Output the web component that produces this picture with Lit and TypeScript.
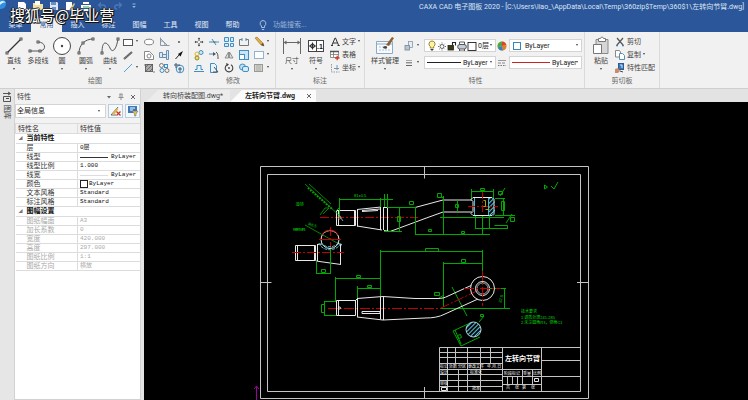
import { LitElement, html, svg, css, nothing } from "lit";
import { customElement, property } from "lit/decorators.js";
import { classMap } from "lit/directives/class-map.js";

const S = "#555";
const B = "#3f8fc4";

/* Small icons are drawn on a 12 x 12 grid. */
const small: Record<string, unknown> = {
  rect: svg`<rect x="1.5" y="3.5" width="9" height="6" fill="#fff" stroke="${S}"/>`,
  ellipse: svg`<ellipse cx="6" cy="6" rx="4.5" ry="2.8" fill="#fff" stroke="#777" stroke-width=".9"/>`,
  axis: svg`<path d="M2.5 1.5v8h9M3 3l6 6M7 9c0-3-2-4-4-4" fill="none" stroke="#8a97a8"/>`,
  dot: svg`<circle cx="6" cy="6" r=".9" fill="#444"/>`,
  thick: svg`<path d="M2 10l8-7" stroke="#555" stroke-width="2"/><path d="M2 10l8-7" stroke="#aaa" stroke-width=".5"/>`,
  poly: svg`<path d="M1.5 2.5h5l4 4v4h-9z" fill="#fff" stroke="#888"/><circle cx="6" cy="7" r="2" fill="none" stroke="#888"/>`,
  mirrorbox: svg`<path d="M1.5 3.5h3v5h-3zM4.5 5.5h4v3h-4zM8.500 1.500h2v9h-2z" fill="#d9ebf7" stroke="#6c8fb0"/>`,
  arrow: svg`<path d="M2.500 10l4-4.500" stroke="#222"/><path d="M10 2L5 5l2.500 2.500z" fill="#111"/>`,
  blueline: svg`<path d="M2 10l8-8" stroke="#5b9fd0"/>`,
  hatch: svg`<rect x="2.500" y="2.500" width="7" height="7" fill="#aaa" stroke="#666"/><path d="M2 6l4-4M2 10l8-8M6 10l4-4M1 3h1M10 10h2" stroke="#555" stroke-width=".7"/>`,
  blocks: svg`<circle cx="3.500" cy="3.500" r="2" fill="none" stroke="#777"/><rect x="6.500" y="2.500" width="3" height="3" fill="none" stroke="${B}"/><circle cx="4" cy="8.500" r="2" fill="none" stroke="${B}"/><circle cx="9" cy="8.500" r="2" fill="none" stroke="#777"/>`,
  gear: svg`<circle cx="7" cy="7" r="3.800" fill="#e3f1fa" stroke="${B}"/><path d="M1 3h6M3 1v5M5 7h4M7 5v5" stroke="#456"/>`,
  move: svg`<path d="M6 2v8M2 6h8" stroke="#444" stroke-dasharray="3 2"/><path d="M6 1.500l1.200 1.500H4.800zM6 10.500l1.200-1.500H4.800zM1.500 6L3 4.800v2.400zM10.500 6L9 4.800v2.400z" fill="#444"/>`,
  trim: svg`<path d="M1 6h4M8 6h3M4 3l4 6" stroke="${B}"/><path d="M5 6h3" stroke="#555"/>`,
  array: svg`<path d="M1.500 1.500h4v4h-4zM7.500 1.500h3v4h-3zM1.500 7.500h4v3h-4zM7.500 7.500h3v3h-3z" fill="#d5eaf8" stroke="${B}"/>`,
  stretch: svg`<path d="M4 3.500H1.500v6h9v-6H8" fill="none" stroke="#777"/><path d="M4 2v3M8 2v3" stroke="${B}"/>`,
  pencil: svg`<path d="M2 2l2-1 6 6 1 3-3-1z" fill="#e0aa45" stroke="#9b7430" stroke-width=".6"/><path d="M8 9l3 1-1-3z" fill="#444"/>`,
  copy: svg`<circle cx="8" cy="3.500" r="2" fill="#cfe7f6" stroke="${B}"/><circle cx="4" cy="5" r="2" fill="none" stroke="#e0b52f"/><circle cx="4" cy="9" r="2" fill="#f5da6a" stroke="#8a8a30"/>`,
  extend: svg`<path d="M1 5h6" stroke="${B}"/><path d="M8 3c2 1 2 4 2 7" fill="none" stroke="#555"/><path d="M5 3l3 2-3 2z" fill="#555"/>`,
  mirror: svg`<path d="M5.500 3v6H2zM6.500 3v6H10z" fill="#ddd" stroke="#888" stroke-width=".9"/>`,
  scale: svg`<rect x="1.500" y="1.500" width="9" height="9" fill="#c8e4f6" stroke="${B}"/><rect x="1.500" y="5.500" width="5" height="5" fill="#fff" stroke="${B}"/>`,
  sheet: svg`<rect x="1.500" y="2.500" width="9" height="7" fill="#fff" stroke="#8fb4d2"/>`,
  offset: svg`<path d="M1 9.500h10M2 7.500h2v-4h4v4h2" fill="none" stroke="${B}"/>`,
  clip: svg`<path d="M2.500 1.500h4l2 2v7h-6z" fill="#e7f3fb" stroke="${B}"/><path d="M6 5l4 5H5" fill="none" stroke="#555"/>`,
  rotate: svg`<path d="M8 2.800A3.800 3.800 0 1 1 4.200 2.700" fill="none" stroke="#444" stroke-width="1.100"/><path d="M3 1l3 1.300-2 1.900z" fill="#444"/><circle cx="6" cy="6" r=".9" fill="#444"/>`,
  union: svg`<circle cx="4.500" cy="5" r="3" fill="#bfe0f5" stroke="${B}"/><rect x="4.500" y="4.500" width="6" height="5" rx="1.500" fill="#d7ecf9" stroke="${B}"/>`,
  pattern: svg`<rect x="1.500" y="2.500" width="8" height="7" fill="#d6d6c8" stroke="#999"/><path d="M3 4h5M3 6h5M3 8h5" stroke="#aaa"/>`,
  text: svg`<path d="M2.800 9.500L6 2h.5l3.200 7.500M4 7h4.500M2 9.500h2M8.500 9.500h2.200" fill="none" stroke="#333"/>`,
  table: svg`<path d="M1.500 2.500h8v6h-8zM1.500 5.500h8M4.500 2.500v6" fill="#fff" stroke="#777" stroke-width=".8"/><path d="M1 2.500h9" stroke="#555" stroke-width="1.500"/><path d="M6 9h4.500M8.200 6.800v4.500" stroke="#d23a2a" stroke-width="1.300"/>`,
  coord: svg`<path d="M2.500 2v8h8" fill="none" stroke="#999" stroke-dasharray="1.500 1"/><path d="M5 6.500h5M8 3v5" stroke="#6d96b8"/>`,
  layers: svg`<rect x="5.500" y="1.500" width="4" height="6" fill="#e5edf5" stroke="#8a97a8" stroke-width=".8"/><rect x="2" y="5.500" width="4.500" height="4.500" fill="#b8c4d2" stroke="#76869a" stroke-width=".8"/>`,
  lines: svg`<path d="M3 3.500h6" stroke="#888" stroke-width=".7"/><path d="M3 5.800h6M3 8.500h6" stroke="#666"/>`,
  bulb: svg`<path d="M6 1a3 3 0 0 1 1.700 5.500V8H4.300V6.500A3 3 0 0 1 6 1z" fill="#fff3a0" stroke="#8c7b20" stroke-width=".9"/><path d="M4.500 9.500h3M5 11h2" stroke="#444"/>`,
  sun: svg`<circle cx="6" cy="6.500" r="2" fill="#fff" stroke="#444" stroke-width=".8"/><path d="M6 2.500v1M6 9.500v1M2 6.500h1M9 6.500h1M3.300 3.800l.7.700M8.700 3.800l-.7.700M3.300 9.200l.7-.7M8.700 9.200l-.7-.7" stroke="#444" stroke-width=".8"/>`,
  lock: svg`<rect x="2" y="5.500" width="5.500" height="4.500" fill="#3d3d10" stroke="#222" stroke-width=".8"/><path d="M6.500 5.500V2.500H9.500v3" fill="none" stroke="#222" stroke-width="1.100"/>`,
  printer: svg`<path d="M3.500 5V2h5v3M3.500 9v2h5V9" fill="#fff" stroke="#333" stroke-width=".8"/><rect x="1.700" y="4.500" width="8.600" height="4.500" rx="2" fill="#c3ced8" stroke="#333" stroke-width=".8"/>`,
  swatch: svg`<rect x="2" y="2.500" width="8" height="8" fill="#fff" stroke="#222" stroke-width=".9"/>`,
  blueswatch: svg`<rect x="2.500" y="2.500" width="7" height="7" fill="#fff" stroke="#3b83bd"/>`,
  wheel: svg`<circle cx="6" cy="6" r="4.500" fill="#e9c62e"/><path d="M6 6V1.500A4.500 4.500 0 0 1 10.300 5z" fill="#d9432f"/><path d="M6 6l4.300-1A4.500 4.500 0 0 1 7 10.400z" fill="#e07f2a"/><path d="M6 6L7 10.400A4.500 4.500 0 0 1 1.800 7.500z" fill="#3a7bd0"/><path d="M6 6L1.800 7.500A4.500 4.500 0 0 1 6 1.500z" fill="#4aa84a"/>`,
  linetype: svg`<path d="M2 3.500h8" stroke="#999"/><path d="M2 6h8" stroke="#888" stroke-dasharray="3 1"/><path d="M2 8.500h8" stroke="#777" stroke-dasharray="1.500 1"/>`,
  cut: svg`<path d="M3 2l6 7M9 2L3 9" stroke="#555" stroke-width="1.200"/><path d="M2 9.500h2M8 9.500h2" stroke="#4b7fae" stroke-width="1.500"/>`,
  pages: svg`<path d="M1.500 1.500h4l1 1.500v5h-5z" fill="#fff" stroke="#888"/><path d="M5.500 4.500h3l2 2v4h-5z" fill="#fff" stroke="#5b8db8"/>`,
  match: svg`<rect x="4.500" y="1.500" width="5" height="6" fill="#3c78b8" stroke="#2b5d93"/><path d="M6 3h2v3" stroke="#cfe4f6" fill="none"/><path d="M1 7l3-1 2 3-2 2H1z" fill="#c98d6a"/><path d="M6 9l3 1" stroke="#444"/>`,
  hint: svg`<path d="M6 1.500a3 3 0 0 1 1.500 5.500v1.500h-3V7A3 3 0 0 1 6 1.500zM4.800 10.500h2.400" fill="none" stroke="#b8c9e4" stroke-width=".9"/>`,
  logo: svg`<circle cx="1" cy="4" r="5" fill="#2f8fe0"/><path d="M0 2c2-2 5-1 6 1-2-1-4 0-6 2z" fill="#d9f0ff"/>`,
  newdoc: svg`<path d="M2 2h6l2 2v7H2z" fill="#fff"/>`,
  open: svg`<path d="M1 3h4l1 1h5v6H1z" fill="#f3dfa0"/><path d="M3 1h5v4H3z" fill="#fff"/>`,
  save: svg`<path d="M2 2h7l1 1v7H2z" fill="#dbe6f6"/><path d="M3 2h5v3H3zM4 7h4v3H4z" fill="#6d8fc4"/>`,
  saveas: svg`<path d="M2 2h6v8H2z" fill="#fff"/><path d="M5 10l5-7 1 1-4 7z" fill="#e7c56a"/>`,
  print: svg`<path d="M3 2h6v2H3zM1 5h10v3H1zM3 9h6v2H3z" fill="#fff"/><path d="M3 7h6" stroke="#3c9a52"/>`,
  undo: svg`<path d="M3 5h4c3 0 3 4 0 4M5 2.500L2.500 5 5 7.500" fill="none" stroke="#4d76b4" stroke-width="1.300"/>`,
  redo: svg`<path d="M9 5H5c-3 0-3 4 0 4M7 2.500L9.500 5 7 7.500" fill="none" stroke="#4d76b4" stroke-width="1.300"/>`,
  more: svg`<path d="M4.500 4h3" stroke="#9fb6da"/><path d="M4.200 6h3.600L6 8z" fill="#9fb6da"/>`,
  pin: svg`<path d="M4.500 3h3M5 3v3M7 3v3M3.500 6.500h5M6 6.500V9" stroke="#777" fill="none" stroke-width=".8"/>`,
  close: svg`<path d="M4 4l4 4M8 4L4 8" stroke="#555" stroke-width=".9"/>`,
  down: svg`<path d="M4 5h4L6 7.500z" fill="#666"/>`,
  pick: svg`<path d="M1 10l7-8M1 10h5" stroke="#666" fill="none"/><path d="M2 9l5-6 1.500 1L4 10z" fill="#e8b54a"/><path d="M6.500 6.500l4 4M10.500 6.500l-4 4" stroke="#c3392b" stroke-width="1.300"/>`,
  filter: svg`<rect x="1" y="1" width="9" height="7" fill="#3b78bc"/><path d="M3 3h5M3 5h3" stroke="#fff"/><path d="M5 6h6L9 9v2H7.500V9z" fill="#e9c04a" stroke="#5a6a78" stroke-width=".5"/>`,
  library: svg`<path d="M2.500 5.500h7v5h-7zM2 2.500h7M7 1l2.500 1.500L7 4" fill="none" stroke="#444" stroke-width=".9"/><path d="M5 7.500h3" stroke="#444"/>`,
};

/* Large icons are drawn on a 20 x 20 grid. */
const sq = (x: number, y: number) => svg`<rect x=${x - 1} y=${y - 1} width="2" height="2" fill="#fff" stroke="#444" stroke-width=".9"/>`;
const large: Record<string, unknown> = {
  line: svg`<path d="M3 17L17 3" stroke="#333" stroke-width="1.300"/>${sq(3, 17)}${sq(17, 3)}`,
  pline: svg`<path d="M2 15h11c6-2 4-9-3-9" fill="none" stroke="#555"/>${sq(2, 15)}${sq(12, 15)}${sq(10, 6)}`,
  circle: svg`<circle cx="10" cy="10" r="8.500" fill="#fff" stroke="#444"/><circle cx="10" cy="10" r="1.200" fill="#444"/>`,
  arc: svg`<path d="M3 17C3 9 9 3 17 3" fill="none" stroke="#555"/>${sq(3, 17)}${sq(7, 7)}${sq(17, 3)}`,
  curve: svg`<path d="M2 17C2 2 8 7 10 12s6 3 8-9" fill="none" stroke="#555"/>${sq(2, 17)}${sq(18, 3)}`,
  dim: svg`<path d="M1.500 2v16M18.500 2v16" stroke="#666"/><path d="M3 6.500h14" stroke="#666"/><path d="M1.500 6.500l3-2v4zM18.500 6.500l-3-2v4z" fill="#666"/>`,
  symbol: svg`<rect x="2.500" y="4.500" width="15" height="11" fill="#fff" stroke="#444"/><path d="M10.500 4v12" stroke="#444"/><circle cx="6.500" cy="10" r="2" fill="none" stroke="#222"/><path d="M3 10h7M6.500 6.500v7" stroke="#222" stroke-width=".9"/><text x="11" y="13" font-size="7" font-weight="700" fill="#111">.1</text>`,
  style: svg`<path d="M1.500 5.500h16v12h-16z" fill="#f8fbfd" stroke="#8daac4"/><path d="M2 8h15" stroke="#8daac4"/><path d="M4 11h9M4 14h12" stroke="#a9c4dc" stroke-dasharray="2 1"/><path d="M11 9l6-8 2 1-5 8z" fill="#8a6236"/><path d="M8 12c0-2 3-3 4-1s-2 2-4 1z" fill="#444"/>`,
  paste: svg`<path d="M5 3.500h12v14H5z" fill="#d6d6d6" stroke="#8a8a8a"/><path d="M7.500 5.500v-3h2l1-1.500h1l1 1.500h2v3z" fill="#fff" stroke="#777"/><path d="M2.500 8.500h8v9h-8z" fill="#fff" stroke="#777"/>`,
};

@customElement("cad-icon")
class CadIcon extends LitElement {
  @property() name = "";
  @property({ type: Boolean }) big = false;
  static styles = css`
    :host { display: block; flex: none; }
    svg { display: block; font-family: "Liberation Sans", sans-serif; }
  `;
  render() {
    const n = this.big ? 20 : 12;
    return html`<svg width=${n} height=${n} viewBox="0 0 ${n} ${n}" aria-hidden="true">${(this.big ? large : small)[this.name] ?? nothing}</svg>`;
  }
}

@customElement("cad-drawing")
class CadDrawing extends LitElement {
  static styles = css`
    :host { display: block; flex: 1; min-height: 0; background: #000; overflow: hidden; }
    svg { display: block; width: 100%; height: 100%; font-family: "Liberation Sans", "Noto Sans CJK SC", sans-serif; }
    .w { fill: none; stroke: #e8e8e8; }
    .frame { fill: none; stroke: #c4c4c4; }
    .g { fill: none; stroke: #00a800; }
    .r { fill: none; stroke: #c00000; }
    .c { fill: none; stroke: #49b8c8; }
    .m { fill: none; stroke: #a000a0; }
    .note { fill: #00d800; font-size: 4px; }
    .cell { fill: #fff; font-size: 4px; }
    .name { fill: #fff; font-size: 7px; font-weight: 700; }
  `;
  render() {
    return html`<svg viewBox="144 102 604 298" preserveAspectRatio="xMinYMin meet" role="img" aria-label="左转向节臂">
      <defs>
        <pattern id="hatch" width="3" height="3" patternUnits="userSpaceOnUse" patternTransform="rotate(45)">
          <path d="M.5 0v3" stroke="#5cc4de" stroke-width="1.200"/>
        </pattern>
      </defs>
      <path class="frame" d="M260.500 166.500h328v232h-328zM267.500 174.500h313v217h-313zM424.500 166.500v12M424.500 387v12M260.500 282.500h11M577 282.500h12"/>
      <path class="m" d="M256.500 400V386M254 389l2.500-3 2.500 3"/>

      <path class="r" d="M320 217.500h98" stroke-dasharray="9 2 2 2"/>
      <path class="w" d="M336.500 210.500h19v15h-19zM338.500 211v14M354.500 211v14M357.500 209.500v17M357 209.500l24-2.500M357 226l25 4M380.500 207v23M383.500 207v23M387.500 208v23M383 207.500h4M384 230.500l6 1 35-13 18-6.500h29M415 207.500l28-7.500h29M362 210.500l18-1.500M362 211.500l16-1"/>
      <path class="g" d="M387 207.500h29M399.500 208v23M397.500 216.500h3v5h-3zM384 231.500h18M339.500 218v-20M339.500 199.500h44M380.500 198v9M384.500 194v13M387.500 194v13M380 199.500h13M336 211l3-3M415.500 208v26M415 234.500h75M409.500 201.500h4v3h-4zM443.500 196v39M437.500 193.500h4v4h-4zM443.500 197.500h-2M457.500 200v12M455.500 204.500h3v3h-3z"/>
      <path class="g" d="M440 217.500h64M482.500 215v20M461.500 231.500h3v2h-3zM428.500 229.500h3v2h-3zM471.500 189v10M493.500 189v10M471 191.500h23M480.500 188.500h4v2h-4zM495 198.500h10M495 215.500h20M503.500 198v18M501.500 201.500h3v9h-3zM475.500 215v14M489.500 215v14M475 228.500h33M494.500 225.500h13v3M498.500 191.500h4v3h-4zM500 196l5-8M506 223l6-9M510.500 217.500h4v4h-4z"/>
      <path class="w" d="M471 199.500l2-2h19l2 2v14l-2 2h-19l-2-2 2-2v-10z"/>
      <path class="c" d="M474.500 198v17M488.500 198v17"/>
      <path d="M489 198h5l1 2v14l-2 2h-4z" fill="url(#hatch)"/>
      <path class="r" d="M468 206.500h30M482.500 192v21" stroke-dasharray="7 2 2 2"/>
      <path d="M483.500 200.500h2v6h-2M485.500 209.500h4" fill="none" stroke="#a8a800"/>

      <path class="g" d="M305 184l36 33M309 184l22 20M320 215l5-7h4l-6 6M305 225l34 19M293 229h12" stroke-width=".8"/>
      <path class="g" d="M308 188l24 21" stroke-dasharray="1.500 1.500" stroke-width="2"/>
      <path class="c" d="M338 214l5 7"/>
      <circle cx="339.500" cy="217.500" r="1.500" fill="none" stroke="#d07030"/>
      <text class="note" x="296" y="206">旋转</text>
      <text class="note" x="354" y="197">81±0.5</text>
      <text class="note" x="293" y="231">GB145</text>
      <text class="note" x="308" y="225" transform="rotate(18 308 225)">R8.5</text>

      <path class="w" d="M295.500 245.500h20v15h-20zM297.500 246v14M314.500 246v14M317 244.500l5-.5M337 243l5 2M340.500 244v20M317.500 244v17M316 261l25 3.500"/>
      <path class="r" d="M292 252.500h52M330.500 227v24" stroke-dasharray="9 2 2 2"/>
      <circle class="w" cx="330" cy="239.500" r="9"/>
      <path class="r" d="M322 235a9 9 0 0 1 16 0M319 239.500h22"/>
      <path class="c" d="M319 243c3 9 18 9 22 0M321 243c3 5 14 5 17 0" stroke-dasharray="3 1"/>
      <path class="g" d="M316.500 261v13M330.500 249v25M316 273.500h14M321.500 269.500h4v3h-4z"/>

      <path class="g" d="M380.500 250v47M380 251.500h102M482.500 250v36M425.500 248.500h13v3h-13zM443.500 262v45M443 263.500h39M461.500 259.500h4v3h-4zM335.500 277v24M335 278.500h46M356.500 275.500h4v2h-4zM357.500 286v12M357 288.500h24M367.500 285.500h4v2h-4zM324 301.500h12M324 315.500h12M324.500 301v14M321.500 304.500h3v8h-3zM434.500 292.500h5v3h-5zM439 298l5-3M440 308.500h70M504.500 288v20M486 288.500h20M452 287l15 29"/>
      <text class="note" x="499" y="300" transform="rotate(-75 502 300)">32.5</text>
      <path class="r" d="M328 308.500h112l42-20" stroke-dasharray="10 2 2 2"/>
      <path class="w" d="M336.500 300.500h19v15h-19zM338.500 301v14M357.500 298v19M357 298.500l26-2 32 2h23c4 0 7-1 9-2l24-11M357 317l26 3 42-2c8 0 14-1 20-4l33-15M380.500 297v22M383.500 297v23M355 301l2-2M362 311.500h18v2h-18z"/>
      <circle class="w" cx="339.500" cy="308" r="1"/>
      <circle class="w" cx="482.500" cy="288.500" r="12"/>
      <circle class="w" cx="482.500" cy="288.500" r="7"/>
      <circle cx="482.500" cy="288.500" r="5.500" fill="#000" stroke="#ccc" stroke-width=".8"/>
      <path class="r" d="M464 288.500h37M482.500 271v35" stroke-dasharray="10 2 2 2"/>
      <circle cx="473.500" cy="329.500" r="7.500" fill="url(#hatch)" stroke="#b0d8e0"/>
      <path class="g" d="M468 324l-15 7 8 15 19-9M455 330l6 14M479 322l5-6M457.500 335.500l3-1 1 3-3 1zM480.500 316.500h3v-2h-3z"/>

      <path class="g" d="M544.500 185v4l3-2zM551 186l3 3 4-7"/>
      <text class="note" x="521" y="313">技术要求</text>
      <text class="note" x="521" y="319">1.调质处理241-285</text>
      <text class="note" x="521" y="324">2.未注圆角R3，倒角C1</text>

      <path class="frame" d="M580 347.500H439.500v44M502.500 347v44M541.500 347v44M541 360.500h39M541 376.500h39M439 352.500h63M439 357.500h63M439 363.500h63M439 369.500h102M439 374.500h63M439 380.500h63M439 386.500h63M502 384.500h39M447.500 347v44M455.500 347v17M467.500 347v44M480.500 347v44M490.500 347v17M458.500 369v22M502 376.500h39M507.500 376v9M512.500 376v9M517.500 376v9M522.500 369v16M532.500 369v16"/>
      <path class="w" d="M441.500 387.500h5v3h-5zM534.500 378.500h4v3h-4z"/>
      <text class="name" x="505" y="361">左转向节臂</text>
      <text class="cell" x="440" y="368">标记 处数</text>
      <text class="cell" x="458" y="368">分区</text>
      <text class="cell" x="468" y="368">更改文件</text>
      <text class="cell" x="487" y="368">年.月.日</text>
      <text class="cell" x="440" y="374">设计</text>
      <text class="cell" x="470" y="374">标准化</text>
      <text class="cell" x="440" y="385">审核</text>
      <text class="cell" x="472" y="390">批准</text>
      <text class="cell" x="504" y="375">阶段标记</text>
      <text class="cell" x="523" y="375">重量</text>
      <text class="cell" x="533" y="375">比例</text>
      <text class="cell" x="506" y="389">共</text>
      <text class="cell" x="515" y="389">张</text>
      <text class="cell" x="522" y="389">第</text>
      <text class="cell" x="531" y="389">张</text>
    </svg>`;
  }
}

type Row = { name: string; value?: string; kind?: "group" | "line" | "thin" | "color"; off?: boolean };
const rows: Row[] = [
  { name: "当前特性", kind: "group" },
  { name: "层", value: "0层" },
  { name: "线型", value: "ByLayer", kind: "line" },
  { name: "线型比例", value: "1.000" },
  { name: "线宽", value: "ByLayer", kind: "thin" },
  { name: "颜色", value: "ByLayer", kind: "color" },
  { name: "文本风格", value: "Standard" },
  { name: "标注风格", value: "Standard" },
  { name: "图幅设置", kind: "group" },
  { name: "图纸幅面", value: "A3", off: true },
  { name: "加长系数", value: "0", off: true },
  { name: "宽度", value: "420.000", off: true },
  { name: "高度", value: "297.000", off: true },
  { name: "图纸比例", value: "1:1", off: true },
  { name: "图纸方向", value: "横放", off: true },
];

const quick = ["logo", "newdoc", "open", "save", "saveas", "print", "undo", "redo", "more"];
const menus = ["菜单", "常用", "插入", "标注", "图幅", "工具", "视图", "帮助"];

/* A trailing "+" marks a tool that opens a list. */
const drawTools = ["rect+", "ellipse", "axis", "dot", "thick", "poly", "mirrorbox", "arrow", "blueline+", "hatch", "blocks", "gear"];
const editTools = ["move", "trim", "array", "stretch", "pencil+", "copy", "extend", "mirror", "scale", "sheet+", "offset", "clip", "rotate", "union", "pattern+"];

@customElement("app-root")
class AppRoot extends LitElement {
  static styles = css`
    :host {
      display: flex; flex-direction: column; height: 100vh; overflow: hidden;
      background: #e3e3e3; color: #444;
      font: 7px/10px Roboto, "Noto Sans CJK SC", sans-serif;
    }
    * { box-sizing: border-box; }
    button, input, select { font: inherit; color: inherit; margin: 0; padding: 0; border: 0; background: none; border-radius: 0; }
    header { position: relative; background: #2b579a; color: #e4ebf6; height: 32px; flex: none; display: flex; flex-direction: column; justify-content: space-between; }
    .caption { display: flex; justify-content: space-between; height: 14px; padding-right: 4px; }
    .quick { display: flex; gap: 4px; height: 10px; }
    .quick button { display: block; height: 12px; }
    .title { white-space: nowrap; color: #dce5f3; line-height: 14px; }
    .menus { display: flex; height: 14px; }
    .menu { width: 31px; text-align: center; }
    .menu.on { background: #f1f1f1; color: #2b579a; }
    .search { display: flex; align-items: center; gap: 4px; margin-left: 9px; }
    .search input { width: 60px; height: 12px; }
    .search input::placeholder { color: #9db3d8; opacity: 1; }
    .mark {
      position: absolute; left: 10px; top: 4px; z-index: 1; white-space: nowrap;
      font: 400 15px/22px "Noto Sans CJK SC", sans-serif; color: #fff;
      text-shadow: 1px 1px 0 #111, -1px 0 0 #111, 0 -1px 0 #333, 1px 0 0 #111, 0 1px 0 #111;
    }
    .ribbon { display: flex; flex: none; height: 57px; background: #f1f1f1; border-bottom: 1px solid #cfcfcf; }
    .group { display: flex; flex-direction: column; justify-content: space-between; border-right: 1px solid #dadada; padding: 3px 0 2px 2px; }
    .group.roomy { padding-left: 4px; padding-right: 4px; }
    .group h2 { margin: 0; font: inherit; text-align: center; color: #666; }
    .body { display: flex; height: 40px; }
    .large { display: flex; flex-direction: column; align-items: center; justify-content: flex-start; padding-top: 1px; width: 24px; white-space: nowrap; }
    .large.wide { width: 36px; }
    .drop::after { content: ""; width: 0; height: 0; border: 1px solid transparent; border-top: 2px solid #444; flex: none; }
    .large.drop::after { margin-top: 2px; }
    span.drop { display: flex; margin-right: 1px; }
    .tools { display: grid; grid-template-rows: repeat(3, 13px); align-items: center; }
    .tools.draw { grid-template-columns: 21px 15px 15px 15px; }
    .tools.edit { grid-template-columns: repeat(4, 15px) 22px; padding-left: 2px; }
    .tools.named { padding-left: 1px; }
    .tool { display: flex; align-items: center; gap: 1px; white-space: nowrap; }
    .tool.drop::after { margin-left: 1px; }
    .fields { display: grid; grid-template-rows: repeat(2, 13px); gap: 4px; padding-top: 4px; }
    .field { display: flex; align-items: center; gap: 3px; }
    .field .tool { width: 18px; }
    .box { display: flex; align-items: center; height: 13px; width: 72px; border: 1px solid #d4d4d4; background: #fff; padding: 0 2px 0 1px; color: #222; overflow: hidden; }
    .box select { flex: 1; min-width: 0; }
    .second .box { width: 73px; }
    .second .field { gap: 1px; }
    .second { padding-right: 2px; }
    .box cad-icon { margin-right: -2px; }
    .box cad-icon + select { margin-left: 2px; }
    .second .box select { margin-left: 4px; }
    select { appearance: none; height: 11px; }
    .rule { height: 1px; width: 34px; background: #222; flex: none; margin: 0 2px 0 1px; }
    .rule.red { background: #c22; width: 38px; }
    .second .box .rule + select { margin-left: 0; }
    main { display: flex; flex: 1; min-height: 0; }
    .dock { width: 14px; flex: none; display: flex; flex-direction: column; align-items: center; gap: 2px; padding-top: 2px; background: #e6e6e6; color: #333; }
    .dock button { writing-mode: vertical-rl; text-orientation: sideways; }
    .panel { width: 127px; flex: none; display: flex; flex-direction: column; background: #f2f2f2; border: 1px solid #d2d2d2; border-top: 0; margin-right: 3px; }
    .bar { display: flex; align-items: center; height: 15px; padding: 0 1px 0 2px; }
    .bar h2 { flex: 1; margin: 0; font: inherit; }
    .pick { display: flex; gap: 2px; height: 15px; margin-bottom: 4px; }
    .pick .box { flex: 1; height: 14px; padding-right: 4px; }
    .pick > button { display: grid; place-items: center; width: 15px; height: 14px; border: 1px solid #b9cce0; background: #f6f9fc; }
    table { border-collapse: collapse; table-layout: fixed; width: 100%; background: #fff; color: #333; font-family: "Liberation Mono", "Noto Sans CJK SC", monospace; }
    .colname { width: 62px; }
    th, td { height: 9px; line-height: 8px; padding: 0 0 0 11px; border: 0 solid #dcdcdc; border-bottom-width: 1px; text-align: left; font-weight: 400; white-space: nowrap; overflow: hidden; }
    td { border-left-width: 1px; padding-left: 2px; font-size: 6px; color: #111; }
    thead th { background: #f2f2f2; font-family: Roboto, "Noto Sans CJK SC", sans-serif; padding-left: 2px; height: 10px; border-top-width: 1px; border-left-width: 1px; }
    .grp th { font-weight: 700; color: #111; padding-left: 3px; }
    .grp th::before { content: "◢"; font-size: 4px; color: #777; display: inline-block; width: 8px; }
    .off th, .off td { color: #aaa; }
    .val { display: flex; align-items: center; gap: 3px; height: 8px; }
    .val.line::before { content: ""; width: 28px; height: 1px; background: #333; }
    .val.thin::before { content: ""; width: 28px; height: 1px; background: #ddd; }
    .val.color { gap: 1px; }
    .val.color::before { content: ""; width: 6px; height: 6px; border: 1px solid #222; background: #fff; }
    .rest { flex: 1; background: #fff; }
    .work { flex: 1; min-width: 0; display: flex; flex-direction: column; }
    .files { display: flex; align-items: flex-end; height: 13px; flex: none; padding-left: 2px; }
    .file { display: flex; align-items: center; height: 12px; padding-left: 17px; width: 84px; white-space: nowrap; background: #ececec; clip-path: polygon(12px 0, 100% 0, 100% 100%, 0 100%); }
    .file.on { width: 86px; background: #fbfbfb; font-weight: 700; color: #222; justify-content: space-between; padding: 0 1px 0 15px; }
  `;

  private tool(id: string, label?: string) {
    const name = id.replace("+", "");
    return html`<button class=${classMap({ tool: true, drop: id.endsWith("+") })} aria-label=${label ?? name}><cad-icon name=${name}></cad-icon>${label ?? nothing}</button>`;
  }

  private big(name: string, label: string, drop = true, wide = false) {
    return html`<button class=${classMap({ large: true, drop, wide })}><cad-icon big name=${name}></cad-icon>${label}</button>`;
  }

  private cell(r: Row) {
    if (r.kind === "group") return html`<tr class="grp"><th colspan="2" scope="rowgroup">${r.name}</th></tr>`;
    return html`<tr class=${r.off ? "off" : ""}><th scope="row">${r.name}</th><td><div class="val ${r.kind ?? ""}">${r.value}</div></td></tr>`;
  }

  private list(label: string, value: string) {
    return html`<select aria-label=${label}><option>${value}</option></select>`;
  }

  render() {
    return html`
      <header>
        <div class="caption">
          <div class="quick">${quick.map((q) => html`<button aria-label=${q}><cad-icon name=${q}></cad-icon></button>`)}</div>
          <div class="title">CAXA CAD 电子图板 2020 - [C:\\Users\\liao_\\AppData\\Local\\Temp\\360zip$Temp\\360$1\\左转向节臂.dwg]</div>
        </div>
        <nav class="menus">
          ${menus.map((m, i) => html`<button class=${classMap({ menu: true, on: i === 1 })}>${m}</button>`)}
          <label class="search"><cad-icon name="hint"></cad-icon><input placeholder="功能搜索..." aria-label="功能搜索" /></label>
        </nav>
        <div class="mark">搜狐号@毕业营</div>
      </header>
      <div class="ribbon">
        <section class="group">
          <div class="body">
            ${this.big("line", "直线")}${this.big("pline", "多段线", false)}${this.big("circle", "圆")}${this.big("arc", "圆弧")}${this.big("curve", "曲线")}
            <div class="tools draw">${drawTools.map((t) => this.tool(t))}</div>
          </div>
          <h2>绘图</h2>
        </section>
        <section class="group">
          <div class="body"><div class="tools edit">${editTools.map((t) => this.tool(t))}</div></div>
          <h2>修改</h2>
        </section>
        <section class="group roomy">
          <div class="body">
            ${this.big("dim", "尺寸")}${this.big("symbol", "符号")}
            <div class="tools named">${this.tool("text+", "文字")}${this.tool("table", "表格")}${this.tool("coord+", "坐标")}</div>
          </div>
          <h2>标注</h2>
        </section>
        <section class="group">
          <div class="body">
            ${this.big("style", "样式管理", true, true)}
            <div class="fields">
              <div class="field">${this.tool("layers+")}
                <div class="box">${["bulb", "sun", "lock", "printer", "swatch"].map((n) => html`<cad-icon name=${n}></cad-icon>`)}${this.list("层", "0层")}<span class="drop"></span></div>
              </div>
              <div class="field">${this.tool("lines+")}
                <div class="box"><span class="rule"></span>${this.list("线宽", "ByLayer")}<span class="drop"></span></div>
              </div>
            </div>
            <div class="fields second">
              <div class="field"><cad-icon name="wheel"></cad-icon>
                <div class="box"><cad-icon name="blueswatch"></cad-icon>${this.list("颜色", "ByLayer")}<span class="drop"></span></div>
              </div>
              <div class="field"><cad-icon name="linetype"></cad-icon>
                <div class="box"><span class="rule red"></span>${this.list("线型", "ByLayer")}<span class="drop"></span></div>
              </div>
            </div>
          </div>
          <h2>特性</h2>
        </section>
        <section class="group roomy">
          <div class="body">
            ${this.big("paste", "粘贴")}
            <div class="tools named">${this.tool("cut", "剪切")}${this.tool("pages+", "复制")}${this.tool("match", "特性匹配")}</div>
          </div>
          <h2>剪切板</h2>
        </section>
      </div>
      <main>
        <aside class="dock"><cad-icon name="library"></cad-icon><button>图库</button></aside>
        <section class="panel">
          <div class="bar"><h2>特性</h2><cad-icon name="down"></cad-icon><cad-icon name="pin"></cad-icon><cad-icon name="close"></cad-icon></div>
          <div class="pick">
            <div class="box">${this.list("特性范围", "全局信息")}<span class="drop"></span></div>
            <button aria-label="取消选择"><cad-icon name="pick"></cad-icon></button>
            <button aria-label="快速选择"><cad-icon name="filter"></cad-icon></button>
          </div>
          <table>
            <colgroup><col class="colname" /><col /></colgroup>
            <thead><tr><th scope="col">特性名</th><th scope="col">特性值</th></tr></thead>
            <tbody>${rows.map((r) => this.cell(r))}</tbody>
          </table>
          <div class="rest"></div>
        </section>
        <section class="work">
          <nav class="files">
            <button class="file">转向桥装配图.dwg*</button>
            <button class="file on">左转向节臂.dwg<cad-icon name="close"></cad-icon></button>
          </nav>
          <cad-drawing></cad-drawing>
        </section>
      </main>
    `;
  }
}
